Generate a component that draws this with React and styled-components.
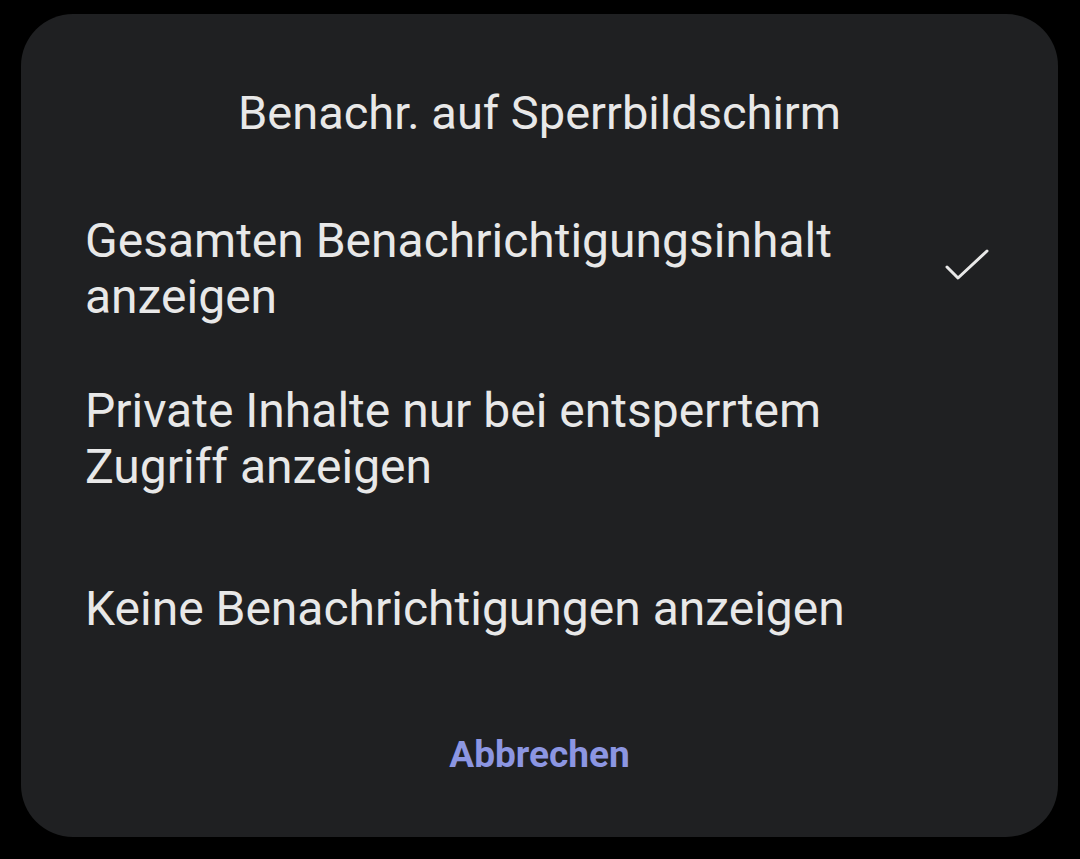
import styled, { createGlobalStyle } from 'styled-components';

const GlobalStyle = createGlobalStyle`
    html, body {
        margin: 0;
        padding: 0;
        background: #000;
    }
    body {
        font-family: Roboto, "Noto Sans", sans-serif;
    }
`;

const Screen = styled.div`
    width: 1080px;
    height: 859px;
    background: #000;
    padding: 14px 22px 22px 21px;
    box-sizing: border-box;
`;

const Dialog = styled.div`
    height: 823px;
    background: #1f2022;
    border-radius: 52px;
    display: flex;
    flex-direction: column;
    padding: 0 64px;
`;

const Title = styled.h2`
    margin: 0;
    height: 170px;
    display: flex;
    align-items: center;
    justify-content: center;
    font-size: 47px;
    font-weight: 400;
    color: #e8e8e8;
    padding-top: 26px;
    box-sizing: border-box;
`;

const Options = styled.ul`
    list-style: none;
    margin: 0;
    padding: 0;
`;

const Option = styled.li`
    height: 170px;
    display: flex;
    align-items: center;
    justify-content: space-between;
    gap: 40px;
`;

const OptionLabel = styled.span`
    font-size: 48px;
    line-height: 56px;
    color: #e8e8e8;
    max-width: 780px;
`;

const Check = styled.svg`
    width: 48px;
    height: 48px;
    margin-right: 2px;
    flex-shrink: 0;
`;

const Footer = styled.div`
    flex: 1;
    display: flex;
    justify-content: center;
    align-items: center;
    padding-bottom: 22px;
`;

const CancelButton = styled.button`
    background: none;
    border: none;
    font-family: inherit;
    font-size: 37px;
    font-weight: 700;
    color: #8c96e2;
    padding: 8px 20px;
`;

const options = [
    { label: 'Gesamten Benachrichtigungsinhalt anzeigen', selected: true },
    { label: 'Private Inhalte nur bei entsperrtem Zugriff anzeigen' },
    { label: 'Keine Benachrichtigungen anzeigen' },
];

export default function App() {
    return (
        <>
            <GlobalStyle />
            <Screen>
                <Dialog>
                    <Title>Benachr. auf Sperrbildschirm</Title>
                    <Options>
                        {options.map((o) => (
                            <Option key={o.label}>
                                <OptionLabel>{o.label}</OptionLabel>
                                {o.selected && (
                                    <Check viewBox="0 0 48 48" fill="none">
                                        <path d="M3 22 L14 33 L43 6" stroke="#e8e8e8" strokeWidth="3" strokeLinecap="round" strokeLinejoin="round" />
                                    </Check>
                                )}
                            </Option>
                        ))}
                    </Options>
                    <Footer>
                        <CancelButton>Abbrechen</CancelButton>
                    </Footer>
                </Dialog>
            </Screen>
        </>
    );
}
